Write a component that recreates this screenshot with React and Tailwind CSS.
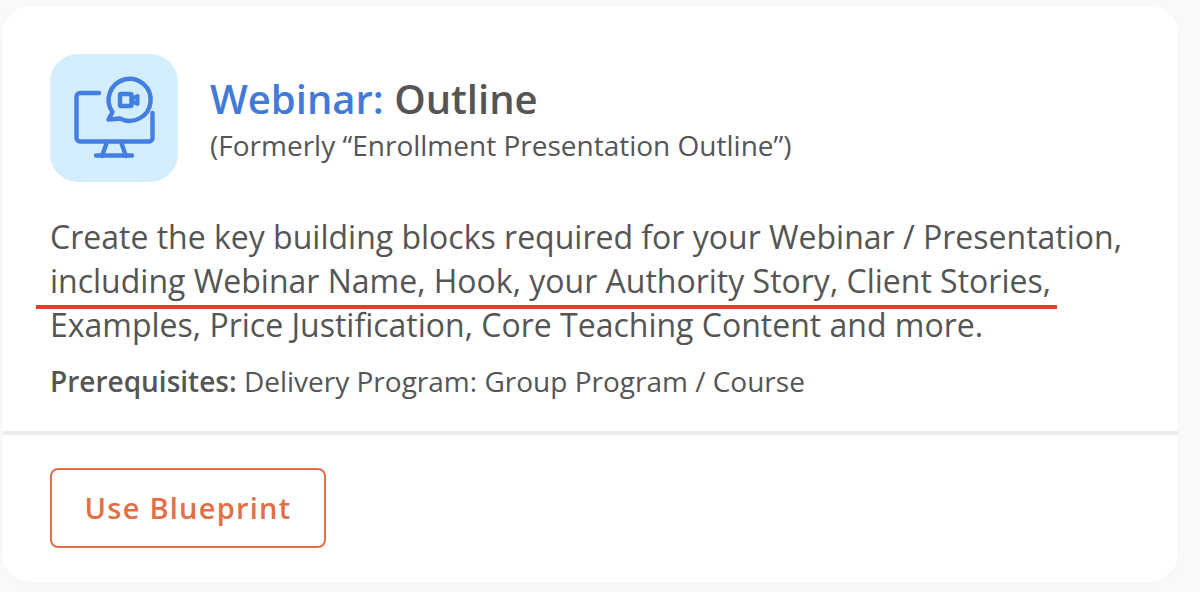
import React from "react";

const font = "font-['Open_Sans',sans-serif]";

function WebinarIcon() {
  return (
    <svg width="128" height="128" viewBox="0 0 128 128" fill="none" stroke="#437fe0" strokeLinecap="round" strokeLinejoin="round">
      {/* monitor */}
      <path d="M49 39H30a3.500 3.500 0 0 0-3.500 3.500V84a3.500 3.500 0 0 0 3.500 3.500h69a3.500 3.500 0 0 0 3.500-3.500V59" strokeWidth="4.400" />
      <path d="M57 88l-5 14M71 88l5 14M46 101.500h36" strokeWidth="4.400" />
      {/* speech bubble */}
      <path d="M62.500 58L58.500 65.500L70 64.500A21 21 0 1 0 62.500 58z" strokeWidth="4.400" />
      {/* camera */}
      <rect x="70" y="40" width="11.500" height="12" rx="1" strokeWidth="4.400" />
      <path d="M82.500 44.500l5-2.500v8l-5-2.500" strokeWidth="4" />
    </svg>
  );
}

export default function App() {
  return (
    <div className={`w-[1200px] h-[592px] bg-[#f9f9f9] pt-[6px] pl-[2px] overflow-hidden ${font}`}>
      <div className="relative w-[1176px] h-[576px] bg-white rounded-[28px] shadow-[0_1px_4px_rgba(0,0,0,0.03)] flex flex-col">
        <div className="px-[48px] pt-[48px]">
          <div className="flex items-center gap-[32px]">
            <div className="w-[128px] h-[128px] rounded-[28px] bg-[#d3edfc] shrink-0">
              <WebinarIcon />
            </div>
            <div className="pt-[2px]">
              <h1 className="text-[40px] leading-[48px] font-semibold text-[#555555]">
                <span className="text-[#437ad7]">Webinar:</span> Outline
              </h1>
              <p className="mt-[4px] text-[28px] leading-[36px] text-[#555555]">(Formerly “Enrollment Presentation Outline”)</p>
            </div>
          </div>
          <p className="mt-[33px] text-[32px] leading-[44px] text-[#555555] whitespace-nowrap">
            Create the key building blocks required for your Webinar / Presentation,
            <br />
            including Webinar Name, Hook, your Authority Story, Client Stories,
            <br />
            Examples, Price Justification, Core Teaching Content and more.
          </p>
          <p className="mt-[16px] text-[28px] leading-[36px] text-[#555555]">
            <span className="font-semibold">Prerequisites:</span> Delivery Program: Group Program / Course
          </p>
        </div>
        <div className="mt-[32px] h-[4px] bg-[#ececec]" />
        <div className="px-[48px] pt-[33px]">
          <button className="w-[276px] h-[80px] rounded-[8px] border-2 border-[#e26f45] text-[#e26f45] text-[29px] font-semibold tracking-[1.25px] bg-white">
            Use Blueprint
          </button>
        </div>
        {/* red annotation line */}
        <div className="absolute left-[34px] top-[299px] w-[1021px] h-[4px] bg-[#e93b25]" />
      </div>
    </div>
  );
}
